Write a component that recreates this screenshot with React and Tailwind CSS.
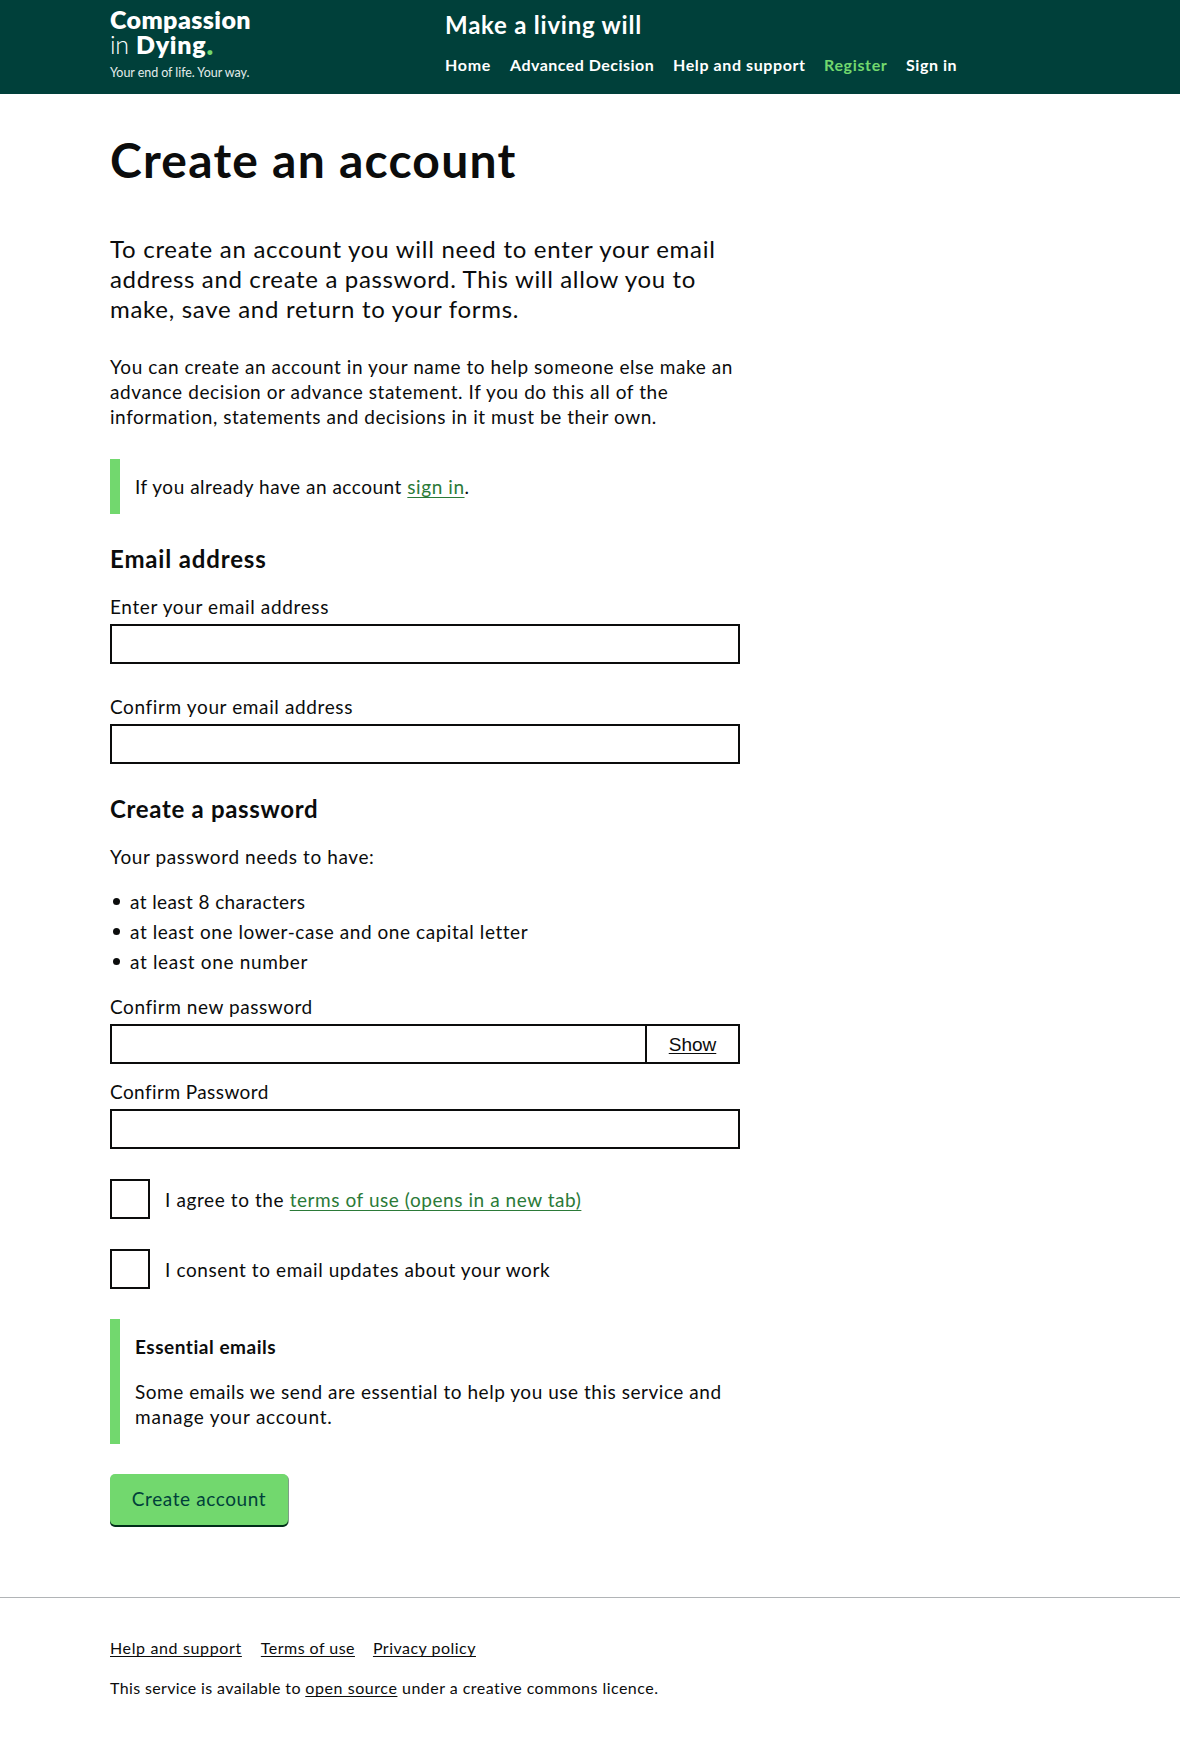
function Logo() {
  return (
    <a href="#" className="block w-[335px] pt-[7px] text-white">
      <div className="text-[25px] leading-[25px] font-extrabold tracking-[0.4px]">Compassion</div>
      <div className="flex text-[25px] leading-[25px] font-extrabold">
        <span className="w-[26px] font-light tracking-[-0.3px]">in</span>
        <span className="tracking-[0.75px]">Dying</span>
        <span className="text-[28px] text-[#72d86e]">.</span>
      </div>
      <div className="mt-[7px] text-[12.5px] leading-[18px] tracking-[-0.06px] text-[#e3eceb]">
        Your end of life. Your way.
      </div>
    </a>
  );
}

function Header() {
  return (
    <header className="h-[94px] bg-[#00403a] text-white">
      <div className="mx-auto flex w-[960px]">
        <Logo />
        <div className="pt-[10px]">
          <div className="text-[24px] leading-[30px] font-bold tracking-[0.77px]">Make a living will</div>
          <nav className="mt-[15px] flex text-[16px] leading-5 font-bold tracking-[0.55px] whitespace-nowrap">
            <a href="#" className="w-[65px] tracking-[0.7px]">Home</a>
            <a href="#" className="w-[163px] tracking-[0.47px]">Advanced Decision</a>
            <a href="#" className="w-[151px] tracking-[0.6px]">Help and support</a>
            <a href="#" className="w-[82px] tracking-[0.65px] text-[#72d86e]">Register</a>
            <a href="#">Sign in</a>
          </nav>
        </div>
      </div>
    </header>
  );
}

function Field({ label, id, className, spacing = "tracking-[0.62px]", children }) {
  return (
    <div className={className}>
      <label htmlFor={id} className={`mb-[5px] block ${spacing}`}>{label}</label>
      <div className="flex">
        <input id={id} className="block h-10 min-w-0 flex-1 border-2 border-[#0b0c0c] bg-white px-[5px] outline-none" />
        {children}
      </div>
    </div>
  );
}

function Checkbox({ children }) {
  return (
    <label className="mt-[30px] flex h-10 items-center">
      <input type="checkbox" className="size-10 shrink-0 appearance-none border-2 border-[#0b0c0c] bg-white" />
      <span className="ml-[15px] whitespace-pre">{children}</span>
    </label>
  );
}

function Bullet() {
  return <span className="mt-[9px] mr-[10px] ml-[3px] size-[7px] shrink-0 rounded-full bg-[#0b0c0c]" />;
}

const link = "text-[#2b7a38] underline decoration-1 underline-offset-[3px] [text-decoration-skip-ink:none]";
const footerLink = "underline decoration-1 underline-offset-[2px] [text-decoration-skip-ink:none]";

export default function App() {
  return (
    <div className="min-h-[1748px] bg-white font-['Lato',sans-serif] text-[19px] leading-[25px] text-[#0b0c0c]">
      <Header />
      <main className="mx-auto w-[960px] pt-[41px]">
        <div className="w-[630px] tracking-[0.56px]">
          <h1 className="text-[48px] leading-[50px] font-bold tracking-[1.23px]">Create an account</h1>
          <p className="mt-[49px] text-[24px] leading-[30px] whitespace-nowrap">
            <span className="tracking-[0.73px]">To create an account you will need to enter your email</span>
            <br />
            <span className="tracking-[0.65px]">address and create a password. This will allow you to</span>
            <br />
            <span className="tracking-[0.71px]">make, save and return to your forms.</span>
          </p>
          <p className="mt-[30px] whitespace-nowrap">
            You can create an account in your name to help someone else make an
            <br />
            <span className="tracking-[0.58px]">advance decision or advance statement. If you do this all of the</span>
            <br />
            information, statements and decisions in it must be their own.
          </p>
          <div className="mt-[30px] border-l-[10px] border-[#72d86e] p-[15px]">
            <span className="tracking-[0.52px]">If you already have an account </span>
            <a href="#" className={link}>sign in</a>.
          </div>

          <h2 className="mt-[30px] text-[24px] leading-[30px] font-bold tracking-[0.84px]">Email address</h2>
          <Field className="mt-5" id="email" label="Enter your email address" spacing="tracking-[0.63px]" />
          <Field className="mt-[30px]" id="email2" label="Confirm your email address" />

          <h2 className="mt-[30px] text-[24px] leading-[30px] font-bold tracking-[0.68px]">Create a password</h2>
          <p className="mt-5 tracking-[0.6px]">Your password needs to have:</p>
          <ul className="mt-5 flex flex-col gap-[5px]">
            <li className="flex">
              <Bullet />
              <span className="tracking-[0.4px]">at least 8 characters</span>
            </li>
            <li className="flex">
              <Bullet />
              <span>at least one lower-case and one capital letter</span>
            </li>
            <li className="flex">
              <Bullet />
              <span className="tracking-[0.66px]">at least one number</span>
            </li>
          </ul>
          <Field className="mt-5" id="password" label="Confirm new password" spacing="tracking-[0.56px]">
            <button className="-ml-0.5 h-10 w-[95px] border-2 border-[#0b0c0c] pt-px font-['Liberation_Sans',sans-serif] text-[19px] leading-[19px] tracking-normal underline decoration-1 underline-offset-2">
              Show
            </button>
          </Field>
          <Field className="mt-[15px]" id="password2" label="Confirm Password" spacing="tracking-[0.42px]" />

          <Checkbox>
            <span className="tracking-[0.6px]">I agree to the </span>
            <a href="#" className={link}>terms of use (opens in a new tab)</a>
          </Checkbox>
          <Checkbox>
            <span className="tracking-[0.6px]">I consent to email updates about your work</span>
          </Checkbox>

          <div className="mt-[30px] border-l-[10px] border-[#72d86e] p-[15px]">
            <h3 className="font-bold tracking-[0.53px]">Essential emails</h3>
            <p className="mt-5 tracking-[0.53px] whitespace-nowrap">
              Some emails we send are essential to help you use this service and
              <br />
              <span className="tracking-[0.78px]">manage your account.</span>
            </p>
          </div>

          <button className="mt-[30px] block h-[51px] w-[178px] rounded-[5px] bg-[#72d86e] pb-0.5 text-center tracking-[0.6px] text-[#00403a] shadow-[0_2px_0_#002d18,1px_1px_0_#7f9d88]">
            Create account
          </button>
        </div>
      </main>

      <footer className="mt-[72px] border-t border-[#b1b4b6] pt-10 text-[16px] leading-5 whitespace-nowrap">
        <div className="mx-auto w-[960px]">
          <div className="flex">
            <a href="#" className={`mr-[19px] tracking-[0.64px] ${footerLink}`}>Help and support</a>
            <a href="#" className={`mr-[18px] tracking-[0.46px] ${footerLink}`}>Terms of use</a>
            <a href="#" className={`tracking-[0.48px] ${footerLink}`}>Privacy policy</a>
          </div>
          <p className="mt-5 tracking-[0.48px]">
            <span className="tracking-[0.36px]">This service is available to </span>
            <a href="#" className={`tracking-[0.57px] ${footerLink}`}>open source</a> under a creative commons licence.
          </p>
        </div>
      </footer>
    </div>
  );
}
